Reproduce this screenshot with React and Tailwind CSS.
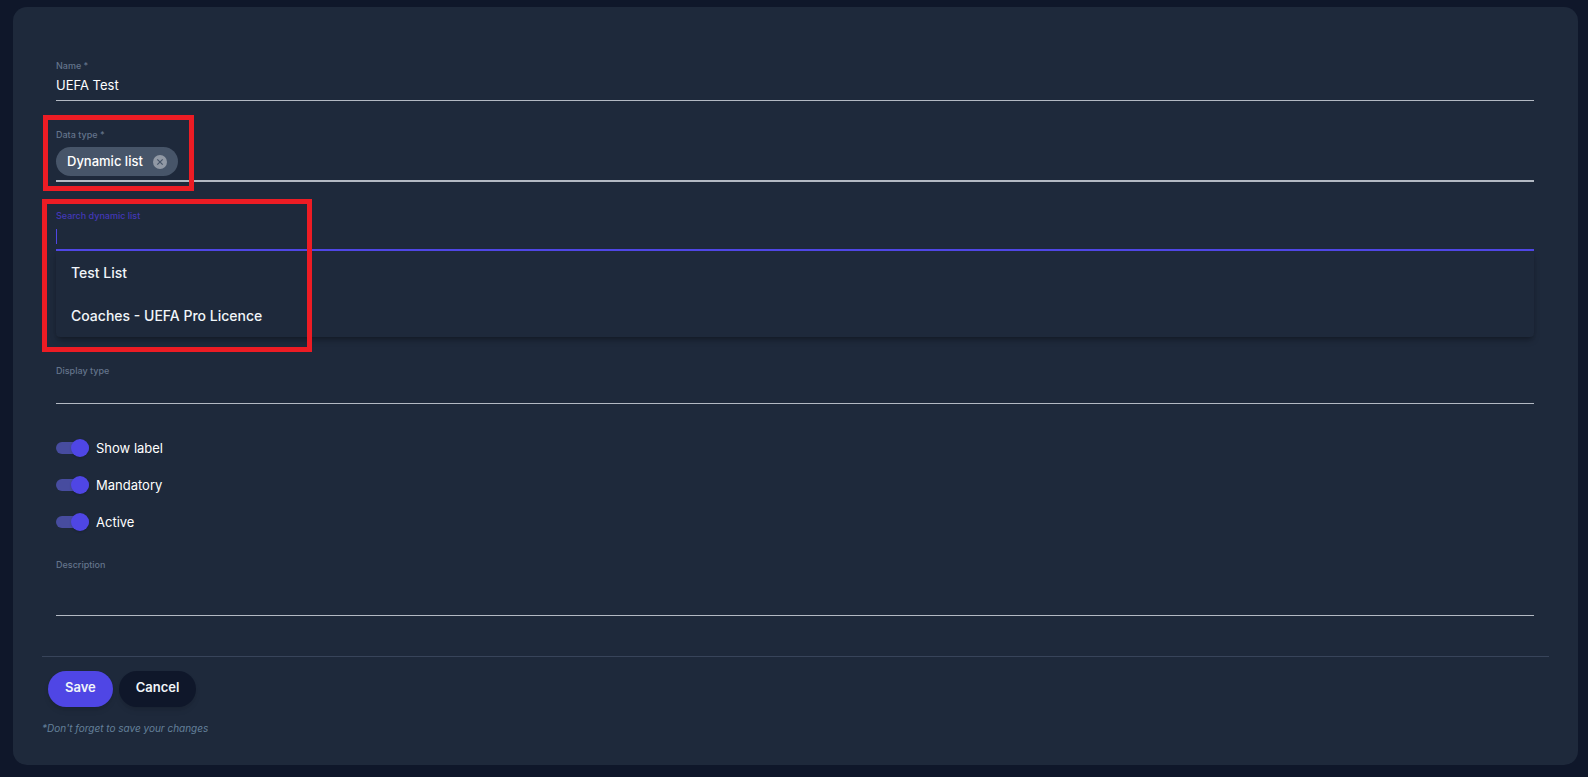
import React, { useState } from 'react';

const options = ['Test List', 'Coaches - UEFA Pro Licence'];

const labelClass = 'block text-[9px] leading-3 font-medium text-[#64748b]';
const inputClass = 'block w-full border-b border-[#b3b9c3] bg-transparent text-[13px] text-white outline-none';

const Highlight = ({ className }) => (
    <div className={`absolute z-10 border-5 border-[#ed1c24] pointer-events-none ${className}`} />
);

const Toggle = ({ id, label }) => {
    const [checked, setChecked] = useState(true);

    return (
        <div className="flex h-[37px] items-center gap-[7px]">
            <input
                id={id}
                type="checkbox"
                role="switch"
                checked={checked}
                onChange={(e) => setChecked(e.target.checked)}
                className="flex h-3 w-[33px] appearance-none items-center rounded-full bg-slate-600 before:size-[18px] before:shrink-0 before:rounded-full before:bg-slate-300 before:shadow-sm checked:justify-end checked:bg-[#474c9f] checked:before:bg-[#4f46e5]"
            />
            <label htmlFor={id} className="text-[13px] leading-4 text-white">{label}</label>
        </div>
    );
};

const App = () => {
    const [name, setName] = useState('UEFA Test');
    const [search, setSearch] = useState('');

    return (
        <div className="min-h-screen bg-[#0f172a] pt-[7px] pr-[10px] pb-3 pl-[13px] font-[Inter,sans-serif]">
            <form
                className="rounded-[14px] bg-[#1e293b] pt-[53px] pr-[29px] pb-[29px] pl-[29px]"
                onSubmit={(e) => e.preventDefault()}
            >
                <div className="flex flex-col gap-7 pr-[15px] pl-[14px]">
                    <div>
                        <label htmlFor="name" className={labelClass}>Name *</label>
                        <input
                            id="name"
                            value={name}
                            onChange={(e) => setName(e.target.value)}
                            className={`${inputClass} h-[29px] pb-[2px]`}
                        />
                    </div>

                    <div className="relative">
                        <Highlight className="-top-[14px] -left-[13px] h-[76px] w-[151px]" />
                        <span className={labelClass}>Data type *</span>
                        <div className="border-b-2 border-[#b3b9c3] pt-[6px] pb-1">
                            <div className="inline-flex h-[29px] items-center gap-[10px] rounded-full bg-[#475569] pr-[11px] pl-[11px] align-top">
                                <span className="pb-[2px] text-[13px] leading-4 font-medium text-white">Dynamic list</span>
                                <button
                                    type="button"
                                    aria-label="Remove"
                                    className="size-[14px] rounded-full bg-[#9199a5] text-[#475569]"
                                >
                                    <svg viewBox="0 0 14 14" className="size-[14px]" stroke="currentColor" strokeWidth="1.2">
                                        <path d="M4.3 4.3l5.4 5.4M9.7 4.3l-5.4 5.4" />
                                    </svg>
                                </button>
                            </div>
                        </div>
                    </div>

                    <div className="relative">
                        <Highlight className="-top-[11px] -left-[14px] h-[153px] w-[270px]" />
                        <label htmlFor="search" className="block text-[9px] leading-3 font-medium text-[#4338b8]">
                            Search dynamic list
                        </label>
                        <div className="relative">
                            <input
                                id="search"
                                value={search}
                                onChange={(e) => setSearch(e.target.value)}
                                className="block h-[29px] w-full border-b-2 border-[#4f46e5] bg-transparent text-[13px] text-white outline-none"
                            />
                            <span className="absolute top-[7px] left-0 h-[15px] w-px bg-[#4f46e5]" />
                        </div>
                        <ul role="listbox" className="rounded-b-sm shadow-md shadow-black/25">
                            {options.map((option) => (
                                <li
                                    key={option}
                                    role="option"
                                    aria-selected="false"
                                    className="flex h-[43px] items-center px-[15px] text-sm font-medium text-slate-100"
                                >
                                    {option}
                                </li>
                            ))}
                        </ul>
                    </div>

                    <div>
                        <label htmlFor="display" className={labelClass}>Display type</label>
                        <input id="display" className={`${inputClass} h-[27px]`} />
                    </div>
                </div>

                <div className="pt-[25px] pr-[15px] pb-[19px] pl-[14px]">
                    <Toggle id="show-label" label="Show label" />
                    <Toggle id="mandatory" label="Mandatory" />
                    <Toggle id="active" label="Active" />
                </div>

                <div className="pr-[15px] pb-10 pl-[14px]">
                    <label htmlFor="description" className={labelClass}>Description</label>
                    <textarea id="description" className={`${inputClass} h-[45px] resize-none`} />
                </div>

                <div className="border-t border-[#38445a] pt-[14px]">
                    <div className="flex gap-[6px] pl-[6px]">
                        <button
                            type="submit"
                            className="h-9 rounded-full bg-[#4f46e5] px-[17px] pb-[2px] text-[13px] font-semibold text-slate-100 shadow-md"
                        >
                            Save
                        </button>
                        <button
                            type="button"
                            className="h-9 rounded-full bg-[#0f172a] px-[17px] pb-[2px] text-[13px] font-semibold text-slate-100 shadow-md"
                        >
                            Cancel
                        </button>
                    </div>
                    <p className="pt-[13px] text-[10px] leading-4 text-[#64809a] italic">
                        *Don't forget to save your changes
                    </p>
                </div>
            </form>
        </div>
    );
};

export default App;
